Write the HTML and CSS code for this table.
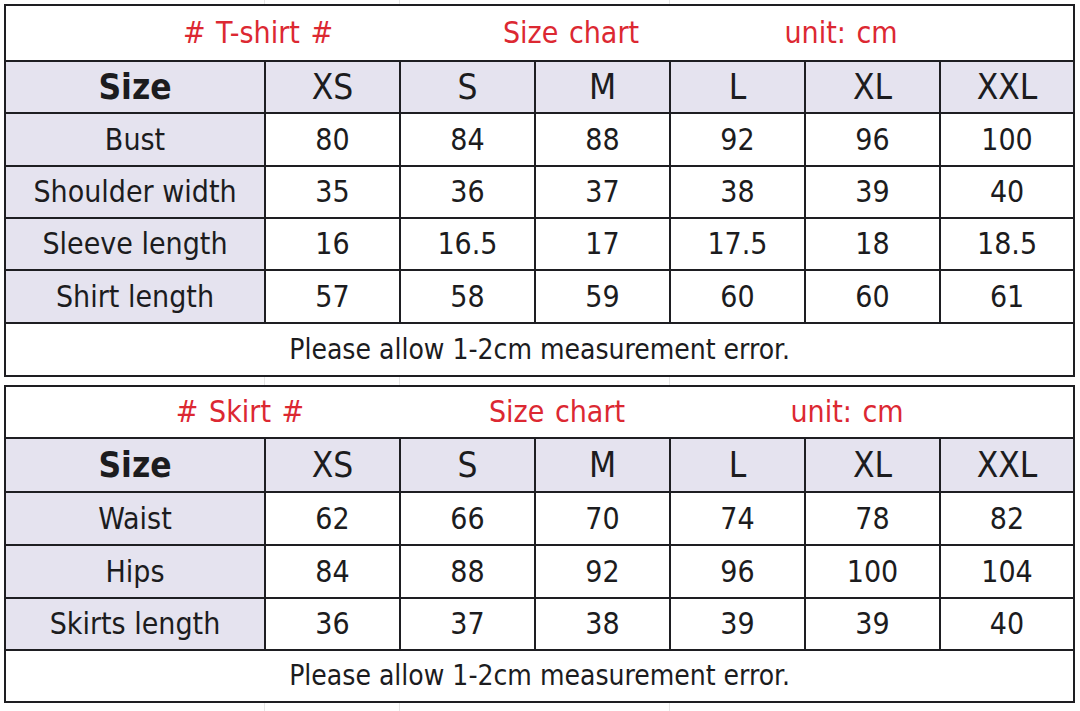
FILE: index.html
```html
<!DOCTYPE html>
<html>
<head>
<meta charset="utf-8">
<link rel="stylesheet" href="styles.css">
</head>
<body>
<div class="sheet">
  <table class="chart">
    <colgroup>
      <col class="c-label"><col class="c-size"><col class="c-size"><col class="c-size"><col class="c-size"><col class="c-size"><col class="c-last">
    </colgroup>
    <tr class="r-title t1">
      <td colspan="7">
        <div class="titles titles-1">
          <span class="title">#&nbsp;T-shirt&nbsp;#</span>
          <span class="title">Size chart</span>
          <span class="title">unit: cm</span>
        </div>
      </td>
    </tr>
    <tr class="r-head">
      <th class="label size">Size</th><th>XS</th><th>S</th><th>M</th><th>L</th><th>XL</th><th>XXL</th>
    </tr>
    <tr class="r-data tall"><td class="label">Bust</td><td>80</td><td>84</td><td>88</td><td>92</td><td>96</td><td>100</td></tr>
    <tr class="r-data"><td class="label">Shoulder width</td><td>35</td><td>36</td><td>37</td><td>38</td><td>39</td><td>40</td></tr>
    <tr class="r-data"><td class="label">Sleeve length</td><td>16</td><td>16.5</td><td>17</td><td>17.5</td><td>18</td><td>18.5</td></tr>
    <tr class="r-data tall"><td class="label">Shirt length</td><td>57</td><td>58</td><td>59</td><td>60</td><td>60</td><td>61</td></tr>
    <tr class="r-note"><td colspan="7">Please allow 1-2cm measurement error.</td></tr>
  </table>

  <div class="gap"></div>

  <table class="chart">
    <colgroup>
      <col class="c-label"><col class="c-size"><col class="c-size"><col class="c-size"><col class="c-size"><col class="c-size"><col class="c-last">
    </colgroup>
    <tr class="r-title t2">
      <td colspan="7">
        <div class="titles titles-2">
          <span class="title">#&nbsp;Skirt&nbsp;#</span>
          <span class="title">Size chart</span>
          <span class="title">unit: cm</span>
        </div>
      </td>
    </tr>
    <tr class="r-head h2">
      <th class="label size">Size</th><th>XS</th><th>S</th><th>M</th><th>L</th><th>XL</th><th>XXL</th>
    </tr>
    <tr class="r-data tall"><td class="label">Waist</td><td>62</td><td>66</td><td>70</td><td>74</td><td>78</td><td>82</td></tr>
    <tr class="r-data tall"><td class="label">Hips</td><td>84</td><td>88</td><td>92</td><td>96</td><td>100</td><td>104</td></tr>
    <tr class="r-data"><td class="label">Skirts length</td><td>36</td><td>37</td><td>38</td><td>39</td><td>39</td><td>40</td></tr>
    <tr class="r-note n2"><td colspan="7">Please allow 1-2cm measurement error.</td></tr>
  </table>
</div>
</body>
</html>
```

FILE: styles.css
```css
html, body {
  margin: 0;
  padding: 0;
  background: #ffffff;
}

body {
  width: 1080px;
  height: 711px;
  overflow: hidden;
  font-family: "DejaVu Sans Condensed", "DejaVu Sans", sans-serif;
  font-stretch: condensed;
  color: #1c1c1e;
  background-color: #ffffff;
  background-image:
    linear-gradient(to right, transparent 264px, #e6e6e6 264px, #e6e6e6 265px, transparent 265px,
      transparent 399px, #e6e6e6 399px, #e6e6e6 400px, transparent 400px,
      transparent 669px, #e6e6e6 669px, #e6e6e6 670px, transparent 670px);
}

.sheet {
  display: flex;
  flex-direction: column;
  padding: 4px 0 0 4px;
}

.gap {
  height: 8px;
}

.chart {
  border-collapse: collapse;
  table-layout: fixed;
  width: 1071px;
  background: #ffffff;
}

.c-label { width: 260px; }
.c-size { width: 135px; }
.c-last { width: 134px; }

.chart td, .chart th {
  border: 2px solid #1e1e22;
  padding: 0;
  text-align: center;
  vertical-align: middle;
  white-space: nowrap;
  overflow: hidden;
}

.r-title td {
  background: #ffffff;
}

.t1 { height: 56px; }
.t2 { height: 52px; }

.titles {
  display: flex;
  align-items: center;
}

.title {
  width: 200px;
  text-align: center;
  color: #dc2832;
  font-size: 30px;
  line-height: 34px;
  word-spacing: 2px;
}

.titles-1 { padding-left: 152px; gap: 113px; }
.titles-1 .title:nth-child(3) { margin-left: -43px; }

.titles-2 { padding-left: 134px; gap: 117px; }
.titles-2 .title:nth-child(3) { margin-left: -27px; }

.r-head { height: 52px; }
.r-head.h2 { height: 54px; }

.r-head th {
  background: #e5e3ef;
  font-weight: normal;
  font-size: 35px;
  line-height: 40px;
}

.r-head th.size {
  font-weight: bold;
}

.r-data { height: 52px; }
.r-data.tall { height: 53px; }

.r-data td {
  font-size: 30px;
  line-height: 36px;
  background: #ffffff;
}

.r-data td.label {
  background: #e5e3ef;
}

.r-note { height: 53px; }
.r-note.n2 { height: 52px; }

.r-note td {
  font-size: 28px;
  line-height: 34px;
  background: #ffffff;
}
```
